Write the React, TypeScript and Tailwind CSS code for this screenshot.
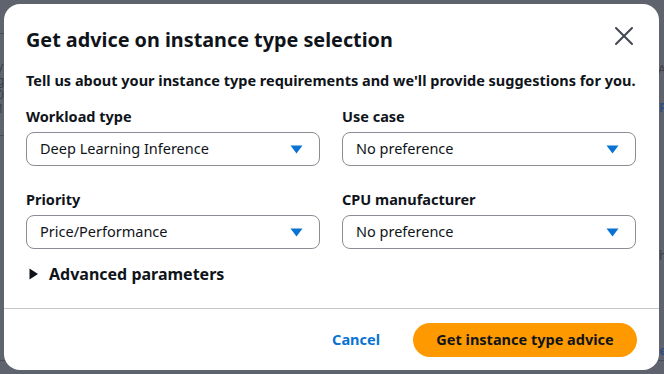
import React from "react";

function Caret() {
  return (
    <svg width="13" height="9" viewBox="0 0 13 9" className="shrink-0">
      <path d="M0.5 0.5 H12.5 L6.5 8.5 Z" fill="#0972d3" />
    </svg>
  );
}

function Select({ value }: { value: string }) {
  return (
    <div className="flex items-center justify-between h-[34px] rounded-[8px] border border-[#8c8c94] bg-white pl-[13px] pr-[16px]">
      <span className="text-[14.5px] text-[#0f141a]">{value}</span>
      <Caret />
    </div>
  );
}

function Field({ label, value }: { label: string; value: string }) {
  return (
    <div className="flex flex-col">
      <div className="text-[14.5px] font-bold text-[#0f141a] leading-[20px] mb-[6px]">{label}</div>
      <Select value={value} />
    </div>
  );
}

export default function App() {
  return (
    <div
      className="relative w-[664px] h-[374px] overflow-hidden bg-[#5f636e]"
      style={{ fontFamily: '"Noto Sans", "Open Sans", sans-serif' }}
    >
      {/* faint background page fragments */}
      <div className="absolute left-0 top-[33px] w-[6px] h-px bg-[#4a4d57]" />
      <div className="absolute left-0 top-[135px] w-[6px] h-px bg-[#4a4d57]" />
      <div className="absolute left-0 top-[360px] w-[6px] h-px bg-[#4a4d57]" />
      <div className="absolute right-0 top-[360px] w-[6px] h-px bg-[#4a4d57]" />
      <div className="absolute left-[-3px] top-[60px] text-[12px] leading-[14px] text-[#3c3f48]">
        y<br />g<br />0<br />1
      </div>
      <div className="absolute right-[-2px] top-[60px] text-[13px] text-[#3c3f48]">A</div>
      <div className="absolute right-[-3px] top-[98px] text-[13px] font-bold text-[#2f4f7c]">P</div>
      <div className="absolute right-[-3px] top-[246px] text-[13px] text-[#3c3f48]">h</div>
      <div className="absolute right-[-3px] top-[341px] text-[13px] font-bold text-[#2f4f7c]">e</div>

      {/* modal */}
      <div className="absolute left-[4px] top-[4px] w-[655px] h-[366px] rounded-[16px] bg-white flex flex-col">
        <div className="flex items-start justify-between pl-[22px] pr-[24px] pt-[22px]">
          <h1 className="text-[19.8px] font-bold leading-[28px] text-[#0f141a]">
            Get advice on instance type selection
          </h1>
          <svg width="22" height="22" viewBox="0 0 22 22" className="mt-[-1px]">
            <path d="M3 3 L19 19 M19 3 L3 19" stroke="#424650" strokeWidth="2" strokeLinecap="round" />
          </svg>
        </div>
        <div className="pl-[22px] pr-[22px] pt-[16px]">
          <p className="text-[14.5px] font-bold leading-[20px] text-[#0f141a]">
            Tell us about your instance type requirements and we'll provide suggestions for you.
          </p>
          <div className="grid grid-cols-2 gap-x-[22px] gap-y-[23px] mt-[16px] pr-[1px]">
            <Field label="Workload type" value="Deep Learning Inference" />
            <Field label="Use case" value="No preference" />
            <Field label="Priority" value="Price/Performance" />
            <Field label="CPU manufacturer" value="No preference" />
          </div>
          <div className="flex items-center mt-[13px] h-[24px]">
            <svg width="10" height="12" viewBox="0 0 10 12" className="ml-[3px] mr-[10px]">
              <path d="M0.5 0.5 L9 6 L0.5 11.5 Z" fill="#0f141a" />
            </svg>
            <span className="text-[16px] font-bold text-[#0f141a]">Advanced parameters</span>
          </div>
        </div>
        <div className="mt-auto border-t border-[#c6c6cd] h-[62px] flex items-center justify-end pr-[22px] gap-[33px]">
          <span className="text-[14.5px] font-bold text-[#0972d3]">Cancel</span>
          <div className="h-[34px] w-[224px] rounded-full bg-[#ff9900] flex items-center justify-center text-[14.5px] font-bold text-[#0f141a]">
            Get instance type advice
          </div>
        </div>
      </div>
    </div>
  );
}
